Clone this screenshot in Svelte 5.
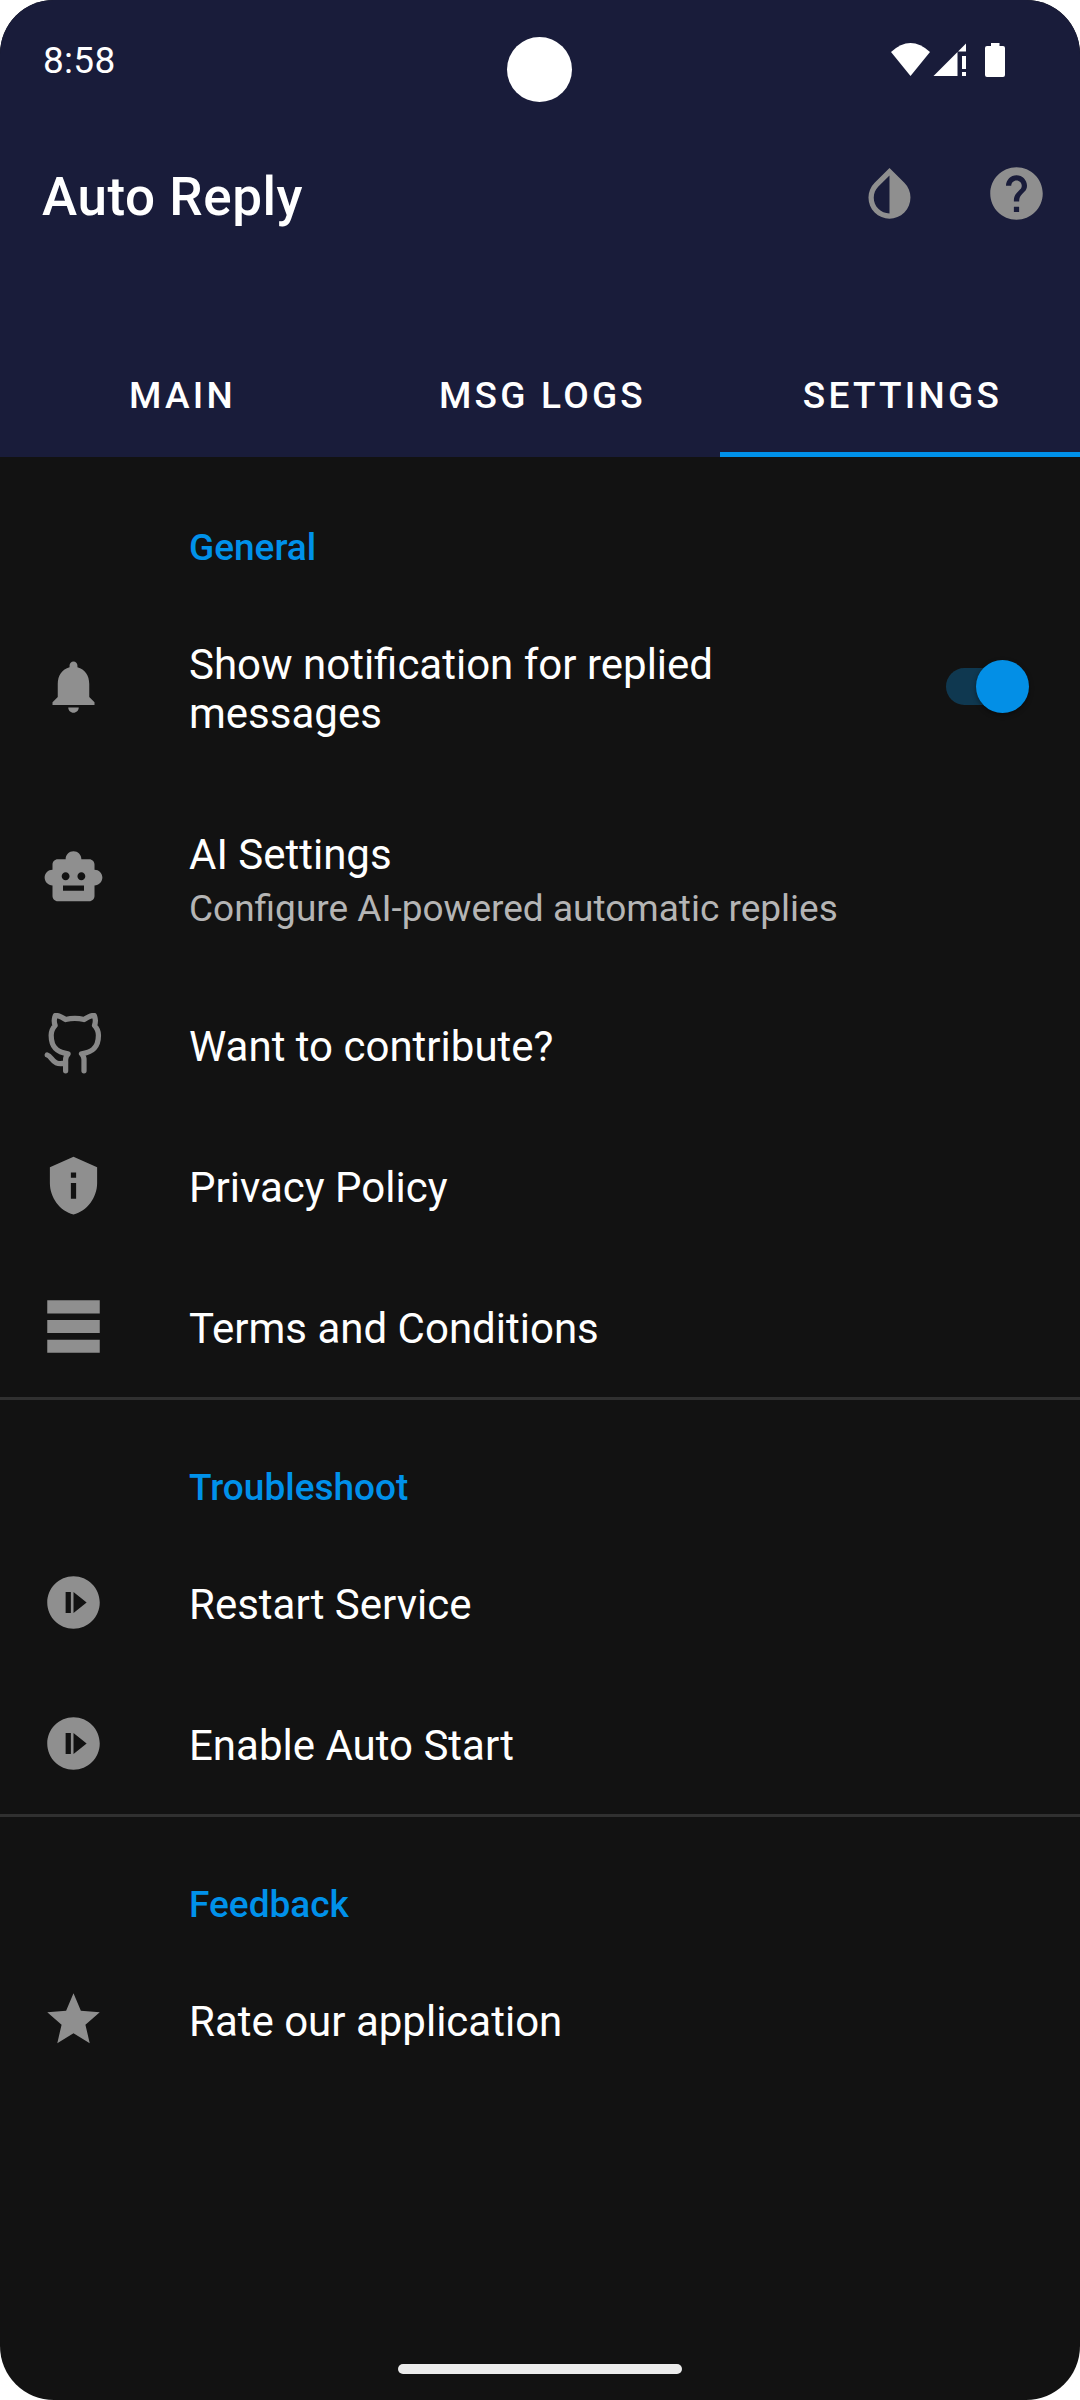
<script>
  const tabs = ['MAIN', 'MSG LOGS', 'SETTINGS'];
  const active = 'SETTINGS';

  const bell = 'M12 22c1.1 0 2-.9 2-2h-4c0 1.1.89 2 2 2zm6-6v-5c0-3.07-1.64-5.64-4.5-6.32V4c0-.83-.67-1.5-1.5-1.5s-1.5.67-1.5 1.5v.68C7.63 5.36 6 7.92 6 11v5l-2 2v1h16v-1l-2-2z';
  const robot = 'M20 9V7c0-1.1-.9-2-2-2h-3c0-1.66-1.34-3-3-3S9 3.34 9 5H6c-1.1 0-2 .9-2 2v2c-1.66 0-3 1.34-3 3s1.34 3 3 3v4c0 1.1.9 2 2 2h12c1.1 0 2-.9 2-2v-4c1.66 0 3-1.34 3-3s-1.34-3-3-3zM7.5 11.5c0-.83.67-1.5 1.5-1.5s1.5.67 1.5 1.5S9.83 13 9 13s-1.5-.67-1.5-1.5zM16 17H8v-2h8v2zm-1-4c-.83 0-1.5-.67-1.5-1.5S14.17 10 15 10s1.5.67 1.5 1.5S15.83 13 15 13z';
  const github = 'M9 19c-5 1.5-5-2.5-7-3m14 6v-3.87a3.37 3.37 0 0 0-.94-2.61c3.14-.35 6.44-1.54 6.44-7A5.44 5.44 0 0 0 20 4.77 5.07 5.07 0 0 0 19.91 1S18.73.65 16 2.48a13.38 13.38 0 0 0-7 0C6.27.65 5.09 1 5.09 1A5.07 5.07 0 0 0 5 4.77a5.44 5.44 0 0 0-1.5 3.78c0 5.42 3.3 6.61 6.44 7A3.37 3.37 0 0 0 9 18.13V22';
  const shield = 'M12 1L3 5v6c0 5.55 3.84 10.74 9 12 5.16-1.26 9-6.45 9-12V5l-9-4zm1 16h-2v-6h2v6zm0-8h-2V7h2v2z';
  const lines = 'M2 2h20v5H2zM2 9.5h20v5H2zM2 17h20v5H2z';
  const play = 'M12 2C6.48 2 2 6.48 2 12s4.48 10 10 10 10-4.48 10-10S17.52 2 12 2zM11 16H9V8h2v8zm1 0V8l5 4-5 4z';
  const star = 'M12 17.27L18.18 21l-1.64-7.03L22 9.24l-7.19-.61L12 2 9.19 8.63 2 9.24l5.46 4.73L5.82 21z';

  const sections = [
    {
      name: 'General',
      items: [
        { title: 'Show notification for replied messages', icon: bell, kind: 'switch' },
        { title: 'AI Settings', summary: 'Configure AI-powered automatic replies', icon: robot, kind: 'double' },
        { title: 'Want to contribute?', icon: github, stroke: true },
        { title: 'Privacy Policy', icon: shield },
        { title: 'Terms and Conditions', icon: lines }
      ]
    },
    {
      name: 'Troubleshoot',
      items: [
        { title: 'Restart Service', icon: play },
        { title: 'Enable Auto Start', icon: play }
      ]
    },
    { name: 'Feedback', items: [{ title: 'Rate our application', icon: star }] }
  ];
</script>

<div class="screen">
  <header>
    <div class="status">
      <span class="time">8:58</span>
      <svg class="indicators" viewBox="0 0 120 40" aria-hidden="true">
        <path d="M6 12Q25.500-6 45 12L25.500 36z" />
        <path d="M48.500 36L72.500 12V36zM73 11.500L81 3.500V11.500zM77 16H81V29H77zM77 32H81V36H77z" />
        <path d="M106 3h8.500v3h3.500q2 0 2 2v27q0 2-2 2h-16q-2 0-2-2V8q0-2 2-2h4z" />
      </svg>
    </div>
    <div class="toolbar">
      <h1>Auto Reply</h1>
      <svg class="icon" viewBox="0 0 24 24" aria-hidden="true">
        <path d="M17.66 7.93L12 2.27 6.34 7.93c-3.12 3.12-3.12 8.19 0 11.31C7.9 20.8 9.95 21.58 12 21.58c2.05 0 4.1-.78 5.66-2.34 3.12-3.12 3.12-8.19 0-11.31zM12 19.59c-1.6 0-3.11-.62-4.24-1.76C6.62 16.69 6 15.19 6 13.59s.62-3.11 1.76-4.24L12 5.1v14.49z" />
      </svg>
      <svg class="icon" viewBox="0 0 24 24" aria-hidden="true">
        <path d="M12 2C6.48 2 2 6.48 2 12s4.48 10 10 10 10-4.48 10-10S17.52 2 12 2zm1 17h-2v-2h2v2zm2.07-7.75l-.9.92C13.45 12.9 13 13.5 13 15h-2v-.5c0-1.1.45-2.1 1.17-2.83l1.24-1.26c.37-.36.59-.86.59-1.41 0-1.1-.9-2-2-2s-2 .9-2 2H8c0-2.21 1.79-4 4-4s4 1.79 4 4c0 .88-.36 1.68-.93 2.25z" />
      </svg>
    </div>
    <nav>
      {#each tabs as tab}
        <div class="tab" class:active={tab === active}>{tab}</div>
      {/each}
    </nav>
  </header>

  <main>
    {#each sections as section, i}
      <section class:divided={i > 0}>
        <h2>{section.name}</h2>
        {#each section.items as item}
          <div class="row {item.kind ?? ''}">
            <svg class="icon" class:stroke={item.stroke} viewBox="0 0 24 24" aria-hidden="true">
              <path d={item.icon} />
            </svg>
            <div class="text">
              <div class="title">{item.title}</div>
              {#if item.summary}<div class="summary">{item.summary}</div>{/if}
            </div>
            {#if item.kind === 'switch'}
              <div class="track"><div class="thumb"></div></div>
            {/if}
          </div>
        {/each}
      </section>
    {/each}
  </main>

  <div class="camera"></div>
  <div class="home"></div>
</div>

<style>
  :global(body) {
    margin: 0;
    background: #fff;
  }
  .screen {
    position: relative;
    box-sizing: border-box;
    width: 1080px;
    height: 2400px;
    overflow: hidden;
    border-radius: 54px;
    background: #121212;
    color: #fff;
    font-family: Roboto, 'Liberation Sans', sans-serif;
  }
  header {
    display: flex;
    flex-direction: column;
    height: 457px;
    background: #191c3a;
  }
  .status {
    display: flex;
    align-items: center;
    justify-content: space-between;
    height: 120px;
    padding: 0 75px 0 43px;
  }
  .time {
    padding-top: 1px;
    font-size: 37px;
    letter-spacing: 0.3px;
    line-height: 43px;
  }
  .indicators {
    width: 120px;
    height: 40px;
    fill: #fff;
  }
  .toolbar {
    display: flex;
    align-items: center;
    gap: 64px;
    height: 147px;
    padding: 0 32px 0 42px;
  }
  h1 {
    flex: 1;
    margin: 0;
    padding-top: 7px;
    font-size: 53px;
    font-weight: 500;
    letter-spacing: 0.55px;
    line-height: 62px;
  }
  .icon {
    flex: none;
    width: 63px;
    height: 63px;
    fill: #8f8f8f;
  }
  .stroke {
    fill: none;
    stroke: #888;
    stroke-width: 2;
    stroke-linecap: round;
    stroke-linejoin: round;
  }
  nav {
    display: grid;
    grid-template-columns: repeat(3, 1fr);
    height: 126px;
    margin-top: auto;
  }
  .tab {
    display: flex;
    align-items: center;
    justify-content: center;
    box-sizing: border-box;
    padding: 8px 0 0 5px;
    border-bottom: 5px solid transparent;
    font-size: 37px;
    font-weight: 500;
    letter-spacing: 3.25px;
    line-height: 43px;
  }
  .active {
    border-color: #0091ea;
  }
  h2 {
    box-sizing: border-box;
    height: 135px;
    margin: 0;
    padding: 69px 0 0 189px;
    color: #0091ea;
    font-size: 37px;
    font-weight: 500;
    line-height: 43px;
  }
  .divided h2 {
    border-top: 3px solid #303030;
    padding-top: 66px;
  }
  .row {
    display: flex;
    align-items: center;
    height: 141px;
    padding: 0 42px;
  }
  .switch {
    height: 188px;
  }
  .double {
    height: 194px;
  }
  .text {
    flex: 1;
    margin-left: 84px;
    padding-top: 4px;
  }
  .switch .text,
  .double .text {
    padding-top: 6px;
  }
  .switch .text {
    padding-right: 60px;
  }
  .title {
    font-size: 42px;
    line-height: 49px;
  }
  .summary {
    margin-top: 8px;
    color: #b5b5b5;
    font-size: 37px;
    line-height: 43px;
  }
  .track {
    display: flex;
    align-items: center;
    justify-content: flex-end;
    width: 83px;
    height: 37px;
    margin-right: 9px;
    border-radius: 19px;
    background: linear-gradient(to right, #0f3850 74px, transparent 74px);
  }
  .thumb {
    flex: none;
    width: 53px;
    height: 53px;
    border-radius: 50%;
    background: #038fe6;
    box-shadow: 0 2px 5px rgba(0, 0, 0, 0.4);
  }
  .camera {
    position: absolute;
    top: 37px;
    left: 507px;
    width: 65px;
    height: 65px;
    border-radius: 50%;
    background: #fff;
  }
  .home {
    position: absolute;
    bottom: 26px;
    left: 398px;
    width: 284px;
    height: 10px;
    border-radius: 5px;
    background: #ececec;
  }
</style>
